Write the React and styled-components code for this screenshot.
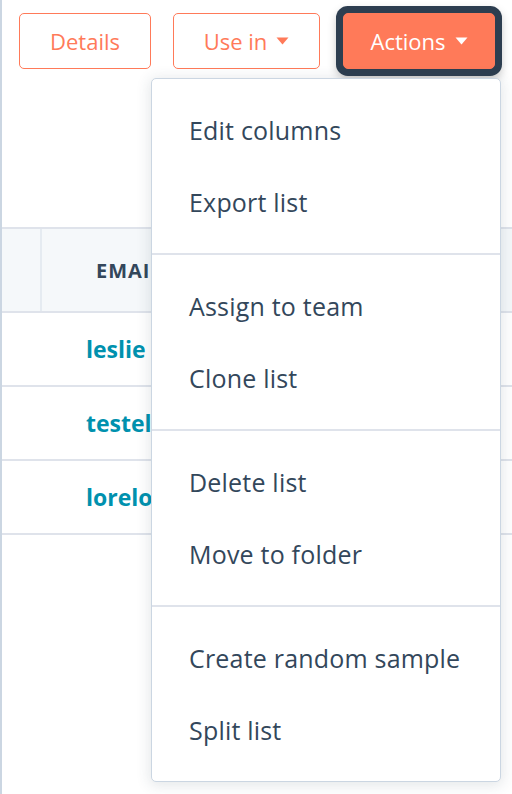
import React from 'react';
import styled, { createGlobalStyle } from 'styled-components';

const GlobalStyle = createGlobalStyle`
    html, body {
        margin: 0;
        padding: 0;
        background: #fff;
    }
    body {
        font-family: "Open Sans", "Noto Sans", sans-serif;
        color: #33475b;
    }
`

const Page = styled.div`
    position: relative;
    width: 512px;
    height: 794px;
    overflow: hidden;
    border-left: 2px solid #cbd6e2;
    box-sizing: border-box;
    background: #fff;
`

const Toolbar = styled.div`
    display: flex;
    align-items: flex-start;
    gap: 22px;
    height: 229px;
    padding: 13px 0 0 17px;
    box-sizing: border-box;
    border-bottom: 2px solid #dfe3eb;
`

const Button = styled.button`
    display: flex;
    align-items: center;
    justify-content: center;
    gap: 9px;
    width: ${p => p.width}px;
    height: 56px;
    padding: 0;
    border-radius: 5px;
    font-family: inherit;
    font-size: 22px;
    border: 1.5px solid #ff7a59;
    color: ${p => (p.primary ? '#fff' : '#ff7a59')};
    background: ${p => (p.primary ? '#ff7a59' : '#fff')};
    box-shadow: ${p => (p.primary ? '0 0 0 7px #2d3e50, 0 4px 10px 6px rgba(0,0,0,0.25)' : 'none')};
    margin-left: ${p => (p.primary ? 1 : 0)}px;
`

const Caret = ({ color }) => (
    <svg width="13" height="8" viewBox="0 0 13 8">
        <path d="M0.5 0.5 H12.5 L6.5 7.5 Z" fill={color} />
    </svg>
);

const HeaderRow = styled.div`
    display: flex;
    height: 82px;
    background: #f5f8fa;
    border-bottom: 2px solid #dfe3eb;
`

const HeaderCell = styled.div`
    display: flex;
    align-items: center;
    width: ${p => p.width}px;
    padding-left: ${p => p.pad || 0}px;
    border-right: ${p => (p.divider ? '2px solid #e5ebf1' : 'none')};
    font-size: 20px;
    font-weight: 700;
    letter-spacing: 1px;
    color: #33475b;
`

const Row = styled.div`
    display: flex;
    align-items: center;
    height: 72px;
    padding-left: 84px;
    border-bottom: 2px solid #dfe3eb;
`

const EmailLink = styled.a`
    font-size: 23px;
    font-weight: 700;
    color: #0091ae;
    text-decoration: none;
`

const Menu = styled.div`
    position: absolute;
    top: 78px;
    left: 149px;
    width: 350px;
    box-sizing: border-box;
    background: #fff;
    border: 1.5px solid #cbd6e2;
    border-radius: 5px;
    box-shadow: 0 2px 14px 2px rgba(45, 62, 80, 0.12);
`

const MenuGroup = styled.div`
    padding: 15px 0;
    & + & {
        border-top: 2px solid #dfe3eb;
    }
`

const MenuItem = styled.div`
    display: flex;
    align-items: center;
    height: 72px;
    padding-left: 37px;
    font-size: 25px;
    color: #33475b;
    letter-spacing: 0.2px;
`

const groups = [
    ['Edit columns', 'Export list'],
    ['Assign to team', 'Clone list'],
    ['Delete list', 'Move to folder'],
    ['Create random sample', 'Split list'],
];

const emails = ['leslie', 'testel', 'lorelo'];

const App = () => {
    return (
        <Page>
            <GlobalStyle />
            <Toolbar>
                <Button width={132}>Details</Button>
                <Button width={147}>Use in <Caret color="#ff7a59" /></Button>
                <Button width={152} primary>Actions <Caret color="#fff" /></Button>
            </Toolbar>
            <HeaderRow>
                <HeaderCell width={38} divider />
                <HeaderCell width={200} pad={54}>EMAIL</HeaderCell>
            </HeaderRow>
            {emails.map(email => (
                <Row key={email}>
                    <EmailLink href="#">{email}</EmailLink>
                </Row>
            ))}
            <Menu>
                {groups.map((items, i) => (
                    <MenuGroup key={i}>
                        {items.map(label => (
                            <MenuItem key={label}>{label}</MenuItem>
                        ))}
                    </MenuGroup>
                ))}
            </Menu>
        </Page>
    );
}

export default App
